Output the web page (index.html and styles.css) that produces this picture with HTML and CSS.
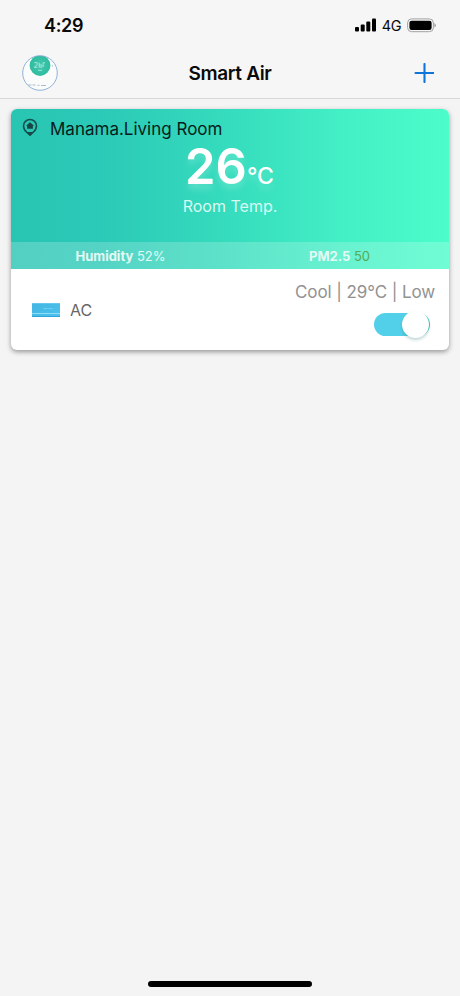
FILE: index.html
```html
<!DOCTYPE html>
<html lang="en">
<head>
<meta charset="utf-8">
<title>Smart Air</title>
<link rel="stylesheet" href="styles.css">
</head>
<body>
<div class="screen">
  <header class="top">
    <div class="status">
      <span class="time">4:29</span>
      <div class="indicators">
        <svg class="signal" width="21" height="14" viewBox="0 0 21 14">
          <rect x="0" y="9" width="4" height="4.5" rx="1"/>
          <rect x="5.7" y="6.4" width="4" height="7.1" rx="1"/>
          <rect x="11.3" y="3.6" width="4" height="9.9" rx="1"/>
          <rect x="17" y="0.6" width="4" height="12.9" rx="1"/>
        </svg>
        <span class="network">4G</span>
        <svg class="battery" width="29" height="15" viewBox="0 0 29 15">
          <rect x="0.6" y="0.9" width="25.8" height="12.8" rx="4" fill="none" stroke="#a2a2a2" stroke-width="1"/>
          <rect x="2.4" y="2.7" width="22.2" height="9.2" rx="2.2" fill="#000"/>
          <path d="M27.4 5v4.6q1.5-.7 1.5-2.3T27.4 5z" fill="#a2a2a2"/>
        </svg>
      </div>
    </div>
    <nav class="nav">
      <svg class="avatar" width="36" height="36" viewBox="0 0 36 36">
        <defs>
          <clipPath id="round"><circle cx="18" cy="18" r="17.3"/></clipPath>
          <radialGradient id="dial"><stop offset="0" stop-color="#46c7b2"/><stop offset="1" stop-color="#2dbd9d"/></radialGradient>
        </defs>
        <circle cx="18" cy="18" r="17.3" fill="#fafcfc"/>
        <g clip-path="url(#round)">
          <circle cx="18" cy="10.5" r="10.4" fill="url(#dial)"/>
          <path d="M12.2 7.6h3v2.2l-3 2.500h3.200M17.2 7.5v4.700h2.600v-2.200h-2.600M20.8 7.800h2.200M21.200 8v4M16 15.300h4" fill="none" stroke="#b9ece2" stroke-width=".8"/>
          <path d="M6 30h3.500m1 0h3m2 .3h2m1.500 .2h5" stroke="#8a9fae" stroke-width=".7"/>
          <circle cx="30.5" cy="11" r=".7" fill="#9fc3dd"/>
        </g>
        <circle cx="18" cy="18" r="17.3" fill="none" stroke="#84a9d4" stroke-width=".9"/>
      </svg>
      <h1 class="title">Smart Air</h1>
      <svg class="add" width="20" height="20" viewBox="0 0 20 20">
        <path d="M10.500 1v18M1.500 10h18" stroke="#0f75d9" stroke-width="2.1" stroke-linecap="round"/>
      </svg>
    </nav>
  </header>
  <main class="content">
    <article class="card">
      <section class="hero">
        <div class="place">
          <svg class="pin" width="16" height="20" viewBox="0 0 16 20">
            <path d="M8 1.500a6.500 6.500 0 0 0-6.500 6.500c0 2.900 1.800 5 3.500 6.500L8 17.200l3-2.700c1.700-1.500 3.500-3.600 3.500-6.500A6.500 6.500 0 0 0 8 1.500z" fill="none" stroke="#17504f" stroke-width="1.6"/>
            <path d="M8 4.300L4 7.800h1.100v3h5.800v-3H12z" fill="#174546"/>
            <path d="M4.500 14h7L8 18z" fill="#17484a"/>
          </svg>
          <span class="place-name">Manama.Living Room</span>
        </div>
        <div class="temp"><span class="degrees">26</span><span class="unit">°C</span></div>
        <div class="caption">Room Temp.</div>
        <div class="metrics">
          <div class="metric"><b>Humidity</b> <span>52%</span></div>
          <div class="metric pm"><b>PM2.5</b> <span class="good">50</span></div>
        </div>
      </section>
      <section class="device">
        <svg class="unit-icon" width="28" height="14" viewBox="0 0 28 14">
          <defs><linearGradient id="ac" x2="1" y2="1"><stop offset="0" stop-color="#43b5e3"/><stop offset="1" stop-color="#4cc3ec"/></linearGradient></defs>
          <rect width="28" height="14" fill="url(#ac)"/>
          <path d="M0 .4h28" stroke="#73cbed" stroke-width=".8"/>
          <path d="M0 10.500h28" stroke="#8fddf7" stroke-width="1"/>
          <path d="M0 13.500h28" stroke="#2fa4d9" stroke-width="1"/>
          <path d="M11.500 5.500h4m1 0h4" stroke="#7fd3f2" stroke-width=".8"/>
        </svg>
        <span class="device-name">AC</span>
        <div class="controls">
          <span class="mode">Cool | 29°C | Low</span>
          <span class="switch"><span class="knob"></span></span>
        </div>
      </section>
    </article>
  </main>
  <div class="home"></div>
</div>
</body>
</html>
```
FILE: styles.css
```css
* { box-sizing: border-box; }
body { margin: 0; background: #f4f4f4; font-family: Inter, "Liberation Sans", sans-serif; color: #0a0a0a; }
.screen { width: 460px; height: 996px; display: flex; flex-direction: column; overflow: hidden; }
svg { display: block; flex: none; }
.top { height: 99px; background: #f6f6f6; border-bottom: 1px solid #d8d8d8; }
.status { height: 50px; display: flex; justify-content: space-between; align-items: center; padding: 0 24px 0 44px; }
.time { font-size: 18px; font-weight: 600; line-height: 20px; letter-spacing: -.35px; padding-top: 1px; }
.indicators { display: flex; align-items: center; }
.network { font-size: 14.5px; line-height: 18px; letter-spacing: -.5px; margin: 2px 6px 0 6px; }
.nav { height: 48px; display: grid; grid-template-columns: 1fr auto 1fr; align-items: center; padding: 0 26px 2px 22px; }
.add { justify-self: end; }
.title { margin: 0; font-size: 19px; font-weight: 600; line-height: 24px; letter-spacing: -.35px; padding: 1px 0 0 4px; }
.content { flex: 1; padding: 10px 11px; }
.card { border-radius: 6px; background: #fff; overflow: hidden; box-shadow: 0 2px 5px rgba(0,0,0,.38); }
.hero { height: 160px; display: flex; flex-direction: column; align-items: center; background: linear-gradient(90deg, #29c5b3 0%, #2bc9b7 20%, #35dbbd 48%, #43efc5 75%, #4cfdca 100%); }
.place { height: 38px; width: 100%; padding-left: 11px; display: flex; align-items: center; gap: 12px; }
.place-name { font-size: 17px; line-height: 22px; color: #071c1a; padding-top: 1px; }
.temp { height: 48px; display: flex; align-items: baseline; color: #fff; text-shadow: 0 5px 6px rgba(255,255,255,.2); line-height: 40px; }
.degrees { font-size: 49px; font-weight: 600; margin-left: -1px; }
.unit { font-size: 23px; font-weight: 500; }
.caption { font-size: 16px; line-height: 22px; color: #d9f9f2; }
.metrics { margin-top: auto; width: 100%; height: 27px; display: grid; grid-template-columns: 1fr 1fr; align-items: center; background: rgba(255,255,255,.2); }
.metric { text-align: center; font-size: 13px; line-height: 18px; color: #e4faf5; }
.metric b { font-weight: 700; }
.good { color: #58a858; }
.device { height: 81px; display: flex; align-items: center; padding: 0 14px 0 21px; }
.device-name { margin-left: 10px; font-size: 16px; color: #666; }
.controls { margin-left: auto; display: flex; flex-direction: column; align-items: flex-end; margin-top: -3px; }
.mode { font-size: 17px; line-height: 22px; letter-spacing: -.1px; color: #929292; }
.switch { width: 56px; height: 23px; margin: 10px 5px 0 0; border-radius: 12px; background: linear-gradient(90deg, #53d0e9 80%, #3cc8b4 100%); display: flex; justify-content: flex-end; align-items: center; }
.knob { width: 27px; height: 27px; margin-right: 1px; border-radius: 50%; background: #fff; box-shadow: 0 2px 3px rgba(0,100,95,.25); }
.home { align-self: center; width: 164px; height: 6px; border-radius: 3px; background: #000; margin-bottom: 9px; }
```
